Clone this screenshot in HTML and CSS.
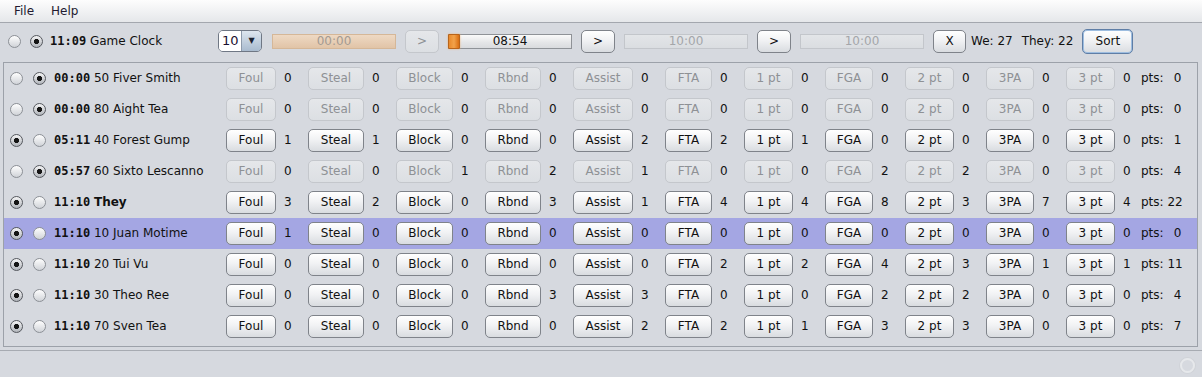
FILE: index.html
```html
<!DOCTYPE html>
<html lang="en">
<head>
    <meta charset="UTF-8">
    <title>Game Clock</title>
    <link rel="stylesheet" href="styles.css">
</head>
<body>
    <div class="menubar">
        <span>File</span>
        <span>Help</span>
    </div>

    <div class="toolbar">
        <span class="radio"></span>
        <span class="radio on gap-radio"></span>
        <span class="clock-label"><b class="clock">11:09</b> Game Clock</span>
        <div class="combo"><span class="combo-val">10</span><span class="combo-arrow">&#9660;</span></div>
        <div class="prog prog-tan">00:00</div>
        <button class="btn tb" disabled>&gt;</button>
        <div class="prog prog-live"><span class="prog-fill"></span>08:54</div>
        <button class="btn tb">&gt;</button>
        <div class="prog prog-off">10:00</div>
        <button class="btn tb">&gt;</button>
        <div class="prog prog-off">10:00</div>
        <button class="btn tb tb-x">X</button>
        <span class="score we">We: 27</span>
        <span class="score they">They: 22</span>
        <button class="btn sort">Sort</button>
    </div>

    <div class="panel" id="rows"></div>

    <div class="statusbar">
        <span class="busy"></span>
    </div>

    <script>
        // stat columns, in the order the buttons show
        const cols = ['Foul', 'Steal', 'Block', 'Rbnd', 'Assist', 'FTA', '1 pt', 'FGA', '2 pt', '3PA', '3 pt'];
        const widths = [50, 56, 57, 56, 60, 47, 49, 48, 49, 48, 49];

        const players = [
            { time: '00:00', name: '50 Fiver Smith', court: false, stats: [0,0,0,0,0,0,0,0,0,0,0], pts: 0 },
            { time: '00:00', name: '80 Aight Tea', court: false, stats: [0,0,0,0,0,0,0,0,0,0,0], pts: 0 },
            { time: '05:11', name: '40 Forest Gump', court: true, stats: [1,1,0,0,2,2,1,0,0,0,0], pts: 1 },
            { time: '05:57', name: '60 Sixto Lescanno', court: false, stats: [0,0,1,2,1,0,0,2,2,0,0], pts: 4 },
            { time: '11:10', name: 'They', court: true, team: true, stats: [3,2,0,3,1,4,4,8,3,7,4], pts: 22 },
            { time: '11:10', name: '10 Juan Motime', court: true, picked: true, stats: [1,0,0,0,0,0,0,0,0,0,0], pts: 0 },
            { time: '11:10', name: '20 Tui Vu', court: true, stats: [0,0,0,0,0,2,2,4,3,1,1], pts: 11 },
            { time: '11:10', name: '30 Theo Ree', court: true, stats: [0,0,0,3,3,0,0,2,2,0,0], pts: 4 },
            { time: '11:10', name: '70 Sven Tea', court: true, stats: [0,0,0,0,2,2,1,3,3,0,0], pts: 7 }
        ];

        const rows = document.getElementById('rows');
        players.forEach(p => {
            let html = '<span class="radio' + (p.court ? ' on' : '') + '"></span>';
            html += '<span class="radio gap-radio' + (p.court ? '' : ' on') + '"></span>';
            html += '<span class="who"><b class="clock">' + p.time + '</b> ' +
                (p.team ? '<b>' + p.name + '</b>' : p.name) + '</span>';
            cols.forEach((c, i) => {
                html += '<button class="btn" style="width:' + widths[i] + 'px"' +
                    (p.court ? '' : ' disabled') + '>' + c + '</button>';
                html += '<span class="val' + (i === cols.length - 1 ? ' last' : '') + '">' + p.stats[i] + '</span>';
            });
            html += '<span class="pts">pts: <span class="pts-val">' + p.pts + '</span></span>';

            const row = document.createElement('div');
            row.className = 'row' + (p.picked ? ' picked' : '');
            row.innerHTML = html;
            rows.appendChild(row);
        });
    </script>
</body>
</html>
```

FILE: styles.css
```css
:root {
    --bg: #d6d9df;
    --text: #111;
    --off-text: #8e9195;
}
body {
    margin: 0;
    width: 1202px;
    height: 377px;
    overflow: hidden;
    background: var(--bg);
    color: var(--text);
    font: 12px "DejaVu Sans", sans-serif;
}

/* menu */
.menubar {
    height: 22px;
    display: flex;
    align-items: center;
    gap: 17px;
    padding-left: 14px;
    background: linear-gradient(#fdfdfd, #e5e7ea);
    border-bottom: 1px solid #a3a7ae;
    color: #221a30;
}

/* clock toolbar */
.toolbar {
    height: 36px;
    padding: 0 0 3px 8px;
    display: flex;
    align-items: center;
}
.clock-label {
    margin-left: 7px;
    width: 168px;
    flex: none;
}
.clock {
    font-family: "DejaVu Sans Mono", monospace;
    font-weight: bold;
}
.combo {
    width: 44px;
    height: 22px;
    box-sizing: border-box;
    display: flex;
    border: 1px solid #6f7784;
    border-radius: 5px;
    overflow: hidden;
    margin-right: 10px;
    flex: none;
}
.combo-val {
    flex: 1;
    background: #fff;
    padding-left: 3px;
    font-size: 13px;
    line-height: 20px;
    color: #1a1030;
}
.combo-arrow {
    width: 19px;
    border-left: 1px solid #8d9aab;
    background: linear-gradient(#dde6ef, #a9bbcf);
    font-size: 8px;
    line-height: 20px;
    text-align: center;
    color: #1c2330;
}
.prog {
    position: relative;
    width: 124px;
    height: 15px;
    box-sizing: border-box;
    flex: none;
    text-align: center;
    line-height: 13px;
    margin-right: 9px;
}
.prog-tan {
    background: linear-gradient(#eed9c4, #e1c4a7);
    border: 1px solid #d5b798;
    color: #a39a92;
}
.prog-live {
    background: linear-gradient(#fafafa, #e4e5e7 60%, #d9dbde);
    border: 1px solid #8f9297;
}
.prog-off {
    background: linear-gradient(#e3e5e8, #dadde1);
    border: 1px solid #c3c6cb;
    color: #a4a6aa;
}
.prog-fill {
    position: absolute;
    left: -1px;
    top: -1px;
    width: 12px;
    height: 15px;
    box-sizing: border-box;
    background: linear-gradient(90deg, #e98a2c, #f2a24a 50%, #d96e12);
    border: 1px solid #b9641a;
    border-radius: 1px;
    box-shadow: 0 0 2px #f0b070;
}
.btn {
    height: 23px;
    box-sizing: border-box;
    flex: none;
    padding: 0;
    font: 12px "DejaVu Sans", sans-serif;
    color: var(--text);
    border: 1px solid #7f838a;
    border-radius: 5px;
    background: linear-gradient(#ffffff, #f1f2f4 45%, #d9dce0);
}
.btn:disabled {
    color: var(--off-text);
    border-color: #c4c7cc;
    background: linear-gradient(#e5e7ea, #dcdfe3);
}
.tb {
    width: 34px;
    margin-right: 9px;
}
.tb-x {
    width: 33px;
    margin-right: 5px;
}
.score.we {
    margin-right: 9px;
}
.score.they {
    margin-right: 8px;
}
.sort {
    width: 51px;
    height: 25px;
    margin-left: 1px;
    border: 1px solid #5f7ea6;
    box-shadow: inset 0 0 0 1px #9dbde0;
}

/* radios */
.radio {
    width: 13px;
    height: 13px;
    box-sizing: border-box;
    flex: none;
    border-radius: 50%;
    border: 1px solid #8c9096;
    background: linear-gradient(#fefefe, #d0d3d8);
}
.radio.on {
    border-color: #55585e;
    background: radial-gradient(circle, #151515 0 2.3px, transparent 2.9px), linear-gradient(#f4f4f5, #b1b5bb);
}
.toolbar .gap-radio {
    margin-left: 9px;
}

/* players */
.panel {
    margin: 0 4px 0 3px;
    border: 1px solid #9ca1a9;
    padding-bottom: 4px;
}
.row {
    height: 31px;
    box-sizing: border-box;
    padding: 0 0 1px 6px;
    display: flex;
    align-items: center;
}
.row.picked {
    background: #a4a6e3;
}
.row .gap-radio {
    margin-left: 10px;
}
.who {
    margin-left: 8px;
    width: 172px;
    flex: none;
    white-space: nowrap;
}
.val {
    width: 32px;
    box-sizing: border-box;
    padding-left: 8px;
    flex: none;
}
.val.last {
    width: 26px;
}
.pts-val {
    display: inline-block;
    width: 14px;
    text-align: right;
}

/* status */
.statusbar {
    margin-top: 3px;
    height: 25px;
    border-top: 1px solid #a7abb2;
    display: flex;
    align-items: center;
    justify-content: flex-end;
    padding-right: 7px;
}
.busy {
    width: 15px;
    height: 15px;
    box-sizing: border-box;
    border-radius: 50%;
    border: 2px solid #e6e8eb;
    box-shadow: 0 0 0 1px #d0d3d8;
    margin-top: 4px;
}
```
